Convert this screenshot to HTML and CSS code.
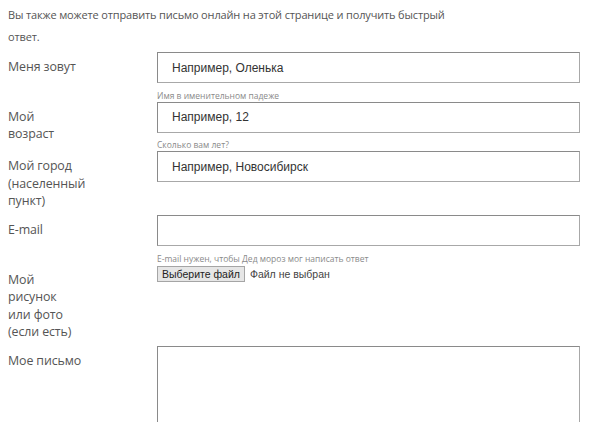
FILE: index.html
```html
<!DOCTYPE html>
<html lang="ru">
<head>
<meta charset="utf-8">
<link rel="stylesheet" href="styles.css">
</head>
<body>
<p class="intro">Вы также можете отправить письмо онлайн на этой странице и получить быстрый ответ.</p>
<form class="form">
  <div class="row">
    <label class="label">Меня зовут</label>
    <div class="field">
      <div class="input"><span class="ph">Например, Оленька</span></div>
      <div class="hint">Имя в именительном падеже</div>
    </div>
  </div>
  <div class="row">
    <label class="label">Мой<br>возраст</label>
    <div class="field">
      <div class="input"><span class="ph">Например, 12</span></div>
      <div class="hint">Сколько вам лет?</div>
    </div>
  </div>
  <div class="row">
    <label class="label">Мой город<br>(населенный<br>пункт)</label>
    <div class="field">
      <div class="input"><span class="ph">Например, Новосибирск</span></div>
    </div>
  </div>
  <div class="row">
    <label class="label">E-mail</label>
    <div class="field">
      <div class="input"></div>
      <div class="hint">E-mail нужен, чтобы Дед мороз мог написать ответ</div>
    </div>
  </div>
  <div class="row">
    <label class="label">Мой<br>рисунок<br>или фото<br>(если есть)</label>
    <div class="field">
      <div class="file"><span class="file-btn">Выберите файл</span><span class="file-name">Файл не выбран</span></div>
    </div>
  </div>
  <div class="row">
    <label class="label">Мое письмо</label>
    <div class="field">
      <div class="textarea"></div>
    </div>
  </div>
</form>
</body>
</html>
```
FILE: styles.css
```css
html, body {
  margin: 0;
  padding: 0;
  background: #fff;
  overflow: hidden;
}
body {
  padding: 4px 8px 0 8px;
  font-family: "Open Sans", sans-serif;
  color: #555;
}
.intro {
  margin: 0;
  width: 440px;
  font-size: 11px;
  letter-spacing: -0.15px;
  line-height: 22px;
}
.form {
  margin-top: 4px;
}
.row {
  display: grid;
  grid-template-columns: 149px 423px;
}
.label {
  white-space: nowrap;
  font-size: 12.4px;
  letter-spacing: -0.1px;
  line-height: 17.5px;
  padding: 6px 0 5.5px 0;
}
.input {
  box-sizing: border-box;
  height: 31px;
  border: 1px solid #8a8a8a;
  border-right-color: #a8a8a8;
  border-bottom-color: #a8a8a8;
  padding-left: 14px;
  display: flex;
  align-items: center;
  font-family: "Liberation Sans", Arial, sans-serif;
  font-size: 12px;
  color: #333;
}
.hint {
  margin-top: 6.5px;
  font-size: 8.5px;
  line-height: 12px;
  color: #8a8a8a;
  white-space: nowrap;
}
.file {
  display: flex;
  align-items: center;
  margin-top: 1px;
  font-family: "Liberation Sans", Arial, sans-serif;
  font-size: 10.5px;
}
.file-btn {
  box-sizing: border-box;
  height: 16px;
  line-height: 14px;
  padding: 0 4px;
  background: #e6e6e6;
  border: 1px solid #a5a5a5;
  color: #222;
}
.file-name {
  margin-left: 5px;
  color: #444;
}
.textarea {
  box-sizing: border-box;
  height: 90px;
  border: 1px solid #8a8a8a;
  border-right-color: #a8a8a8;
}
```
